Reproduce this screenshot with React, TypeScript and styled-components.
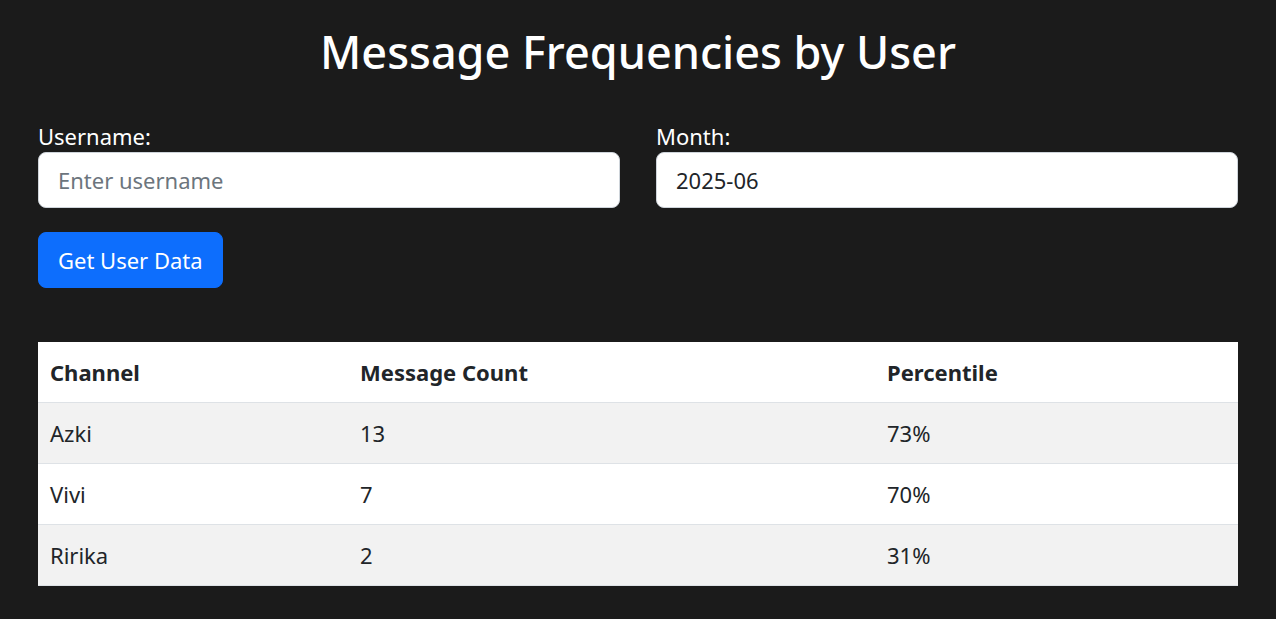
import React from "react";
import styled, { createGlobalStyle } from "styled-components";

const Global = createGlobalStyle`
  html, body { margin: 0; padding: 0; background: #1b1b1b; }
  body {
    font-family: "Noto Sans", "Open Sans", sans-serif;
    font-size: 22px;
    line-height: 1.5;
    color: #ffffff;
  }
  * { box-sizing: border-box; }
`;

const Page = styled.div`
  width: 1200px;
  margin: 0 auto;
  padding-top: 25px;
`;

const Title = styled.h1`
  margin: 0 0 42px;
  text-align: center;
  font-size: 45px;
  font-weight: 500;
  line-height: 54px;
  color: #ffffff;
`;

const FormRow = styled.div`
  display: grid;
  grid-template-columns: 1fr 1fr;
  column-gap: 36px;
`;

const Field = styled.div`
  display: flex;
  flex-direction: column;
`;

const Label = styled.label`
  font-size: 22px;
  line-height: 31px;
  color: #ffffff;
`;

const Input = styled.input`
  height: 56px;
  padding: 0 19px;
  font-family: inherit;
  font-size: 22px;
  line-height: 30px;
  color: #212529;
  background: #ffffff;
  border: 1px solid #ced4da;
  border-radius: 8px;
  outline: none;
  &::placeholder { color: #6c757d; }
`;

const Button = styled.button`
  display: block;
  margin-top: 24px;
  height: 56px;
  padding: 0 19px;
  font-family: inherit;
  font-size: 22px;
  line-height: 30px;
  color: #ffffff;
  background: #0d6efd;
  border: 1px solid #0d6efd;
  border-radius: 8px;
  cursor: pointer;
`;

const Table = styled.table`
  margin-top: 54px;
  width: 100%;
  border-collapse: collapse;
  background: #ffffff;
  color: #212529;
  table-layout: fixed;
`;

const Th = styled.th<{ $w: number }>`
  width: ${(p) => p.$w}px;
  text-align: left;
  font-weight: 700;
  padding: 15px 12px;
  line-height: 30px;
  border-bottom: 1px solid #dee2e6;
`;

const Tr = styled.tr<{ $striped: boolean }>`
  background: ${(p) => (p.$striped ? "#f2f2f2" : "#ffffff")};
`;

const Td = styled.td`
  padding: 15px 12px;
  line-height: 30px;
  border-bottom: 1px solid #dee2e6;
`;

const rows = [
  { channel: "Azki", count: 13, pct: "73%" },
  { channel: "Vivi", count: 7, pct: "70%" },
  { channel: "Ririka", count: 2, pct: "31%" },
];

export default function App() {
  return (
    <>
      <Global />
      <Page>
        <Title>Message Frequencies by User</Title>
        <FormRow>
          <Field>
            <Label htmlFor="username">Username:</Label>
            <Input id="username" placeholder="Enter username" />
          </Field>
          <Field>
            <Label htmlFor="month">Month:</Label>
            <Input id="month" defaultValue="2025-06" />
          </Field>
        </FormRow>
        <Button>Get User Data</Button>
        <Table>
          <thead>
            <tr>
              <Th $w={310}>Channel</Th>
              <Th $w={527}>Message Count</Th>
              <Th $w={363}>Percentile</Th>
            </tr>
          </thead>
          <tbody>
            {rows.map((r, i) => (
              <Tr key={r.channel} $striped={i % 2 === 0}>
                <Td>{r.channel}</Td>
                <Td>{r.count}</Td>
                <Td>{r.pct}</Td>
              </Tr>
            ))}
          </tbody>
        </Table>
      </Page>
    </>
  );
}
